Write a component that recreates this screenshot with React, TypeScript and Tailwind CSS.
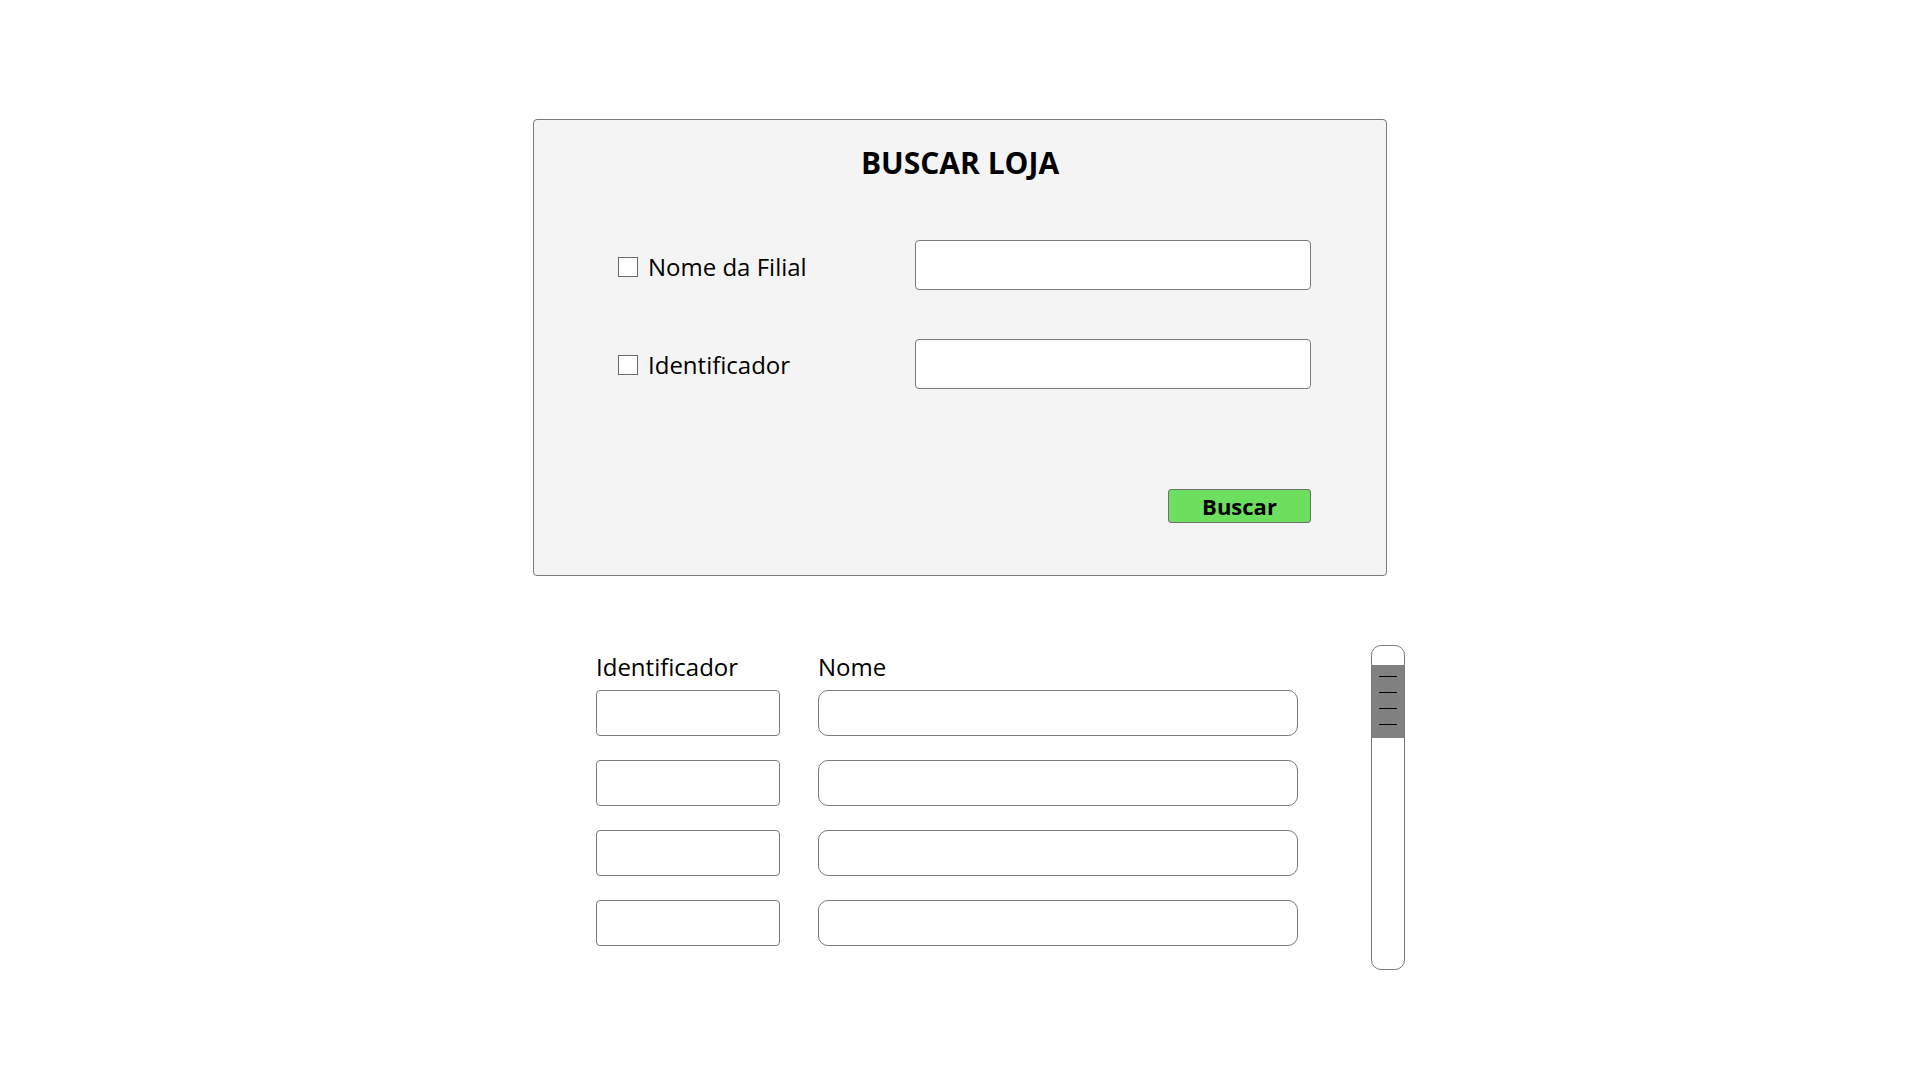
import { useState } from 'react';

const rows = [0, 1, 2, 3];

export default function App() {
  const [nome, setNome] = useState('');
  const [ident, setIdent] = useState('');
  const [useNome, setUseNome] = useState(false);
  const [useIdent, setUseIdent] = useState(false);

  return (
    <div className="min-h-screen bg-white pt-[119px] font-['Open_Sans',sans-serif] text-black">
      {/* Search panel */}
      <div className="mx-auto w-[854px] rounded-[4px] border border-[#7a7a7a] bg-[#f4f4f4] pt-[22px] pb-[52px] pl-[84px] pr-[75px]">
        <h1 className="-ml-[9px] text-center text-[30px] font-bold leading-[42px]">BUSCAR LOJA</h1>

        <div className="mt-[56px] flex items-center">
          <label className="mt-[3px] flex w-[297px] items-center gap-[10px] text-[24px] leading-[32px]">
            <input
              type="checkbox"
              checked={useNome}
              onChange={(e) => setUseNome(e.target.checked)}
              className="h-[20px] w-[20px] appearance-none border border-[#6b6b6b] bg-white"
            />
            Nome da Filial
          </label>
          <input
            value={nome}
            onChange={(e) => setNome(e.target.value)}
            className="h-[50px] w-[396px] rounded-[4px] border border-[#7a7a7a] bg-white px-3 text-[20px] outline-none"
          />
        </div>

        <div className="mt-[49px] flex items-center">
          <label className="mt-[1px] flex w-[297px] items-center gap-[10px] text-[24px] leading-[32px]">
            <input
              type="checkbox"
              checked={useIdent}
              onChange={(e) => setUseIdent(e.target.checked)}
              className="h-[20px] w-[20px] appearance-none border border-[#6b6b6b] bg-white"
            />
            Identificador
          </label>
          <input
            value={ident}
            onChange={(e) => setIdent(e.target.value)}
            className="h-[50px] w-[396px] rounded-[4px] border border-[#7a7a7a] bg-white px-3 text-[20px] outline-none"
          />
        </div>

        <div className="mt-[100px] flex justify-end">
          <button className="flex h-[34px] w-[143px] items-center justify-center rounded-[3px] border border-[#6f6f6f] bg-[#6ddf5e] text-[22px] font-bold leading-none">
            Buscar
          </button>
        </div>
      </div>

      {/* Results list */}
      <div className="mx-auto mt-[69px] flex w-[854px] items-start pl-[63px]">
        <div className="w-[184px] shrink-0 pt-[6px]">
          <div className="text-[24px] leading-[32px]">Identificador</div>
          <div className="mt-[7px] flex flex-col gap-[24px]">
            {rows.map((r) => (
              <div key={r} className="h-[46px] w-[184px] rounded-[4px] border border-[#7a7a7a] bg-white" />
            ))}
          </div>
        </div>
        <div className="ml-[38px] w-[480px] shrink-0 pt-[6px]">
          <div className="text-[24px] leading-[32px]">Nome</div>
          <div className="mt-[7px] flex flex-col gap-[24px]">
            {rows.map((r) => (
              <div key={r} className="h-[46px] w-[480px] rounded-[10px] border border-[#7a7a7a] bg-white" />
            ))}
          </div>
        </div>

        {/* scrollbar */}
        <div className="ml-[73px] h-[325px] w-[34px] shrink-0 overflow-hidden rounded-[10px] border border-[#7a7a7a] bg-white pt-[19px]">
          <div className="flex h-[73px] flex-col items-center gap-[15px] bg-[#808080] pt-[11px]">
            <div className="h-px w-[18px] bg-black" />
            <div className="h-px w-[18px] bg-black" />
            <div className="h-px w-[18px] bg-black" />
            <div className="h-px w-[18px] bg-black" />
          </div>
        </div>
      </div>
    </div>
  );
}
